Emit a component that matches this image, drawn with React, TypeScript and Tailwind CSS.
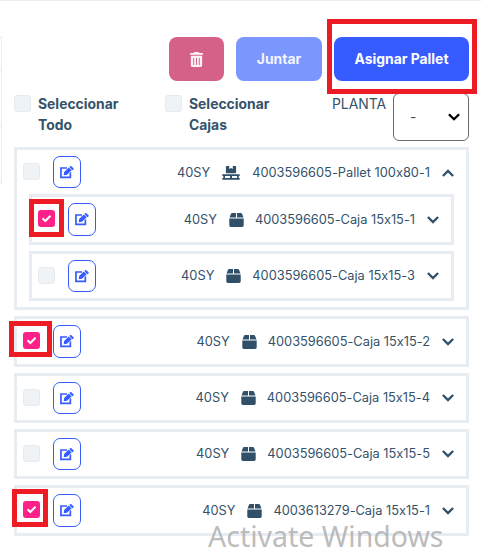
import React from "react";
import { FaTrashCan } from "react-icons/fa6";

function Check({ on = false, mark = "" }: { on?: boolean; mark?: string }) {
  return (
    <span
      className={`relative flex size-[17px] shrink-0 items-center justify-center rounded-[3px] ${
        on ? "bg-[#ff2088] text-white" : "border border-[#e6ebf1] bg-[#eff3f6]"
      }`}
    >
      {on && (
        <svg width="11" height="9" viewBox="0 0 11 9" fill="none" stroke="currentColor" strokeWidth="2">
          <path d="M1.5 4.2l2.8 2.8L9.5 1.8" />
        </svg>
      )}
      {mark && <span className={`absolute border-5 border-[#ed1c24] ${mark}`} />}
    </span>
  );
}

function Chevron({ up = false }: { up?: boolean }) {
  return (
    <svg
      className={`ml-3 shrink-0 text-[#30506a] ${up ? "rotate-180" : ""}`}
      width="12"
      height="8"
      viewBox="0 0 12 8"
      fill="none"
      stroke="currentColor"
      strokeWidth="2.3"
    >
      <path d="M.9 1L6 6.1 11.1 1" />
    </svg>
  );
}

function EditIcon() {
  return (
    <svg width="14" height="13" viewBox="0 0 14 13" fill="currentColor">
      <path d="M7 1.2v1.6H1.8v7.7h7.7V7.2l1.7-1.5v6.5H.1v-11z" />
      <path d="M3.7 9.2l.4-3.2L8.8 1.4l2.9 2.8L7 8.8z" />
      <path d="M9.4 .9l.8-.7c.3-.3.8-.3 1.1 0l2.2 2.1c.3.3.3.8 0 1.1l-1.2 .9z" />
    </svg>
  );
}

function BoxIcon() {
  return (
    <svg className="ml-3 shrink-0 text-[#30506a]" width="15" height="14" viewBox="0 0 15 14" fill="currentColor">
      <path d="M3.2 0H7v4.6H.5L2 .8C2.2.3 2.6 0 3.2 0zM8 0h3.8c.6 0 1 .3 1.2.8l1.5 3.8H8z" />
      <path d="M.3 5.5h14.4v6.8c0 .9-.7 1.6-1.6 1.6H1.9c-.9 0-1.6-.7-1.6-1.6z" />
    </svg>
  );
}

function PalletIcon() {
  return (
    <svg className="ml-3 shrink-0 text-[#30506a]" width="18" height="14" viewBox="0 0 18 14" fill="currentColor">
      <path d="M4.6 0h2.6v3L9 2.1l1.8.9V0h2.6c.4 0 .7.3.7.7v5.9c0 .3-.3.6-.7.6H4.6c-.4 0-.7-.3-.7-.6V.7c0-.4.3-.7.7-.7z" />
      <path d="M.3 8.3h17.4V10h-1v2.1h1v1.7H.3v-1.7h1V10h-1zM3 10v2.1h5V10zm7 0v2.1h5V10z" fillRule="evenodd" />
    </svg>
  );
}

type RowProps = {
  name: string;
  on?: boolean;
  mark?: string;
  pallet?: boolean;
  tall?: boolean;
};

function RowLine({ name, on, mark, pallet, tall }: RowProps) {
  return (
    <div className="flex items-start pt-[6px] pr-3 pl-[6px]">
      <div className="pt-[7px]">
        <Check on={on} mark={mark} />
      </div>
      <button
        className={`ml-[13px] flex w-7 shrink-0 items-center justify-center rounded-[7px] border border-[#365bff] text-[#365bff] ${
          tall ? "h-[33px]" : "h-8"
        }`}
      >
        <EditIcon />
      </button>
      <div
        className={`flex flex-1 items-center justify-end whitespace-nowrap ${
          tall || pallet ? "h-[33px]" : "h-8"
        }`}
      >
        <span>40SY</span>
        {pallet ? <PalletIcon /> : <BoxIcon />}
        <span className={pallet ? "ml-3" : "ml-[11px]"}>{name}</span>
        <Chevron up={pallet} />
      </div>
    </div>
  );
}

function Row(props: RowProps) {
  return (
    <div className={`border-3 border-[#e8edf3] ${props.tall ? "h-[51px]" : "h-[50px]"}`}>
      <RowLine {...props} />
    </div>
  );
}

export default function App() {
  return (
    <div className="relative h-[555px] w-[481px] overflow-hidden bg-white font-['Inter',sans-serif] text-[#34526a] [font-feature-settings:'calt'_0]">
      <div className="absolute inset-x-0 top-0 h-px bg-[#e8edf3]" />
      <div className="absolute top-[37px] left-0 flex h-[147px] w-[2px] flex-col border-y border-r border-[#e8edf3]">
        <div className="h-[34px] border-b border-[#e8edf3]" />
        <div className="h-14 border-b border-[#e8edf3]" />
      </div>

      <div className="pr-3 pl-[14px]">
        <div className="flex justify-end gap-3 pt-[37px] text-[13.9px] font-bold text-white">
          <button className="flex h-11 w-[55px] items-center justify-center rounded-lg bg-[#d66188] text-[#fdf3f6]">
            <FaTrashCan className="size-[15px]" />
          </button>
          <button className="h-11 w-[86px] rounded-lg bg-[#7c96ff] pt-px text-[#f3f5ff]">Juntar</button>
          <button className="relative h-11 w-[135px] rounded-lg bg-[#365bff] pt-px">
            Asignar Pallet
            <span className="absolute -top-[18px] -left-[7px] h-[75px] w-[150px] border-5 border-[#ed1c24]" />
          </button>
        </div>

        <div className="flex h-[66px] items-start text-[13.9px] leading-[21px]">
          <div className="flex w-[151px] gap-[7px] pt-[13px]">
            <div className="pt-px">
              <Check />
            </div>
            <span className="w-[82px] font-bold">Seleccionar Todo</span>
          </div>
          <div className="flex w-[167px] gap-[7px] pt-[13px]">
            <div className="pt-px">
              <Check />
            </div>
            <span className="w-[82px] font-bold">Seleccionar Cajas</span>
          </div>
          <span className="w-[61px] pt-[13px]">PLANTA</span>
          <div className="mt-[12px] flex h-12 w-[76px] items-center justify-between rounded-md border border-[#6b6b6b] pr-2 pl-4">
            <span>-</span>
            <svg width="12" height="8" viewBox="0 0 12 8" fill="none" stroke="#000" strokeWidth="2.3">
              <path d="M.9 1.2L6 6.2l5.1-5" />
            </svg>
          </div>
        </div>

        <div className="flex flex-col gap-[6px] text-[12.8px]">
          <div className="h-[163px] border-3 border-[#e8edf3]">
            <div className="h-11">
              <RowLine name="4003596605-Pallet 100x80-1" pallet />
            </div>
            <div className="flex flex-col gap-[6px] px-3">
              <Row name="4003596605-Caja 15x15-1" on tall mark="-left-[9px] -top-[11px] h-[38px] w-[35px]" />
              <Row name="4003596605-Caja 15x15-3" />
            </div>
          </div>
          <Row name="4003596605-Caja 15x15-2" on tall mark="-left-[14px] -top-[11px] h-9 w-[43px]" />
          <Row name="4003596605-Caja 15x15-4" />
          <Row name="4003596605-Caja 15x15-5" />
          <Row name="4003613279-Caja 15x15-1" on tall mark="-left-[11px] -top-[12px] h-[38px] w-9" />
        </div>
      </div>

      <div className="absolute top-[519px] left-[208px] font-['Noto_Sans','Open_Sans',sans-serif] text-[28.5px] leading-[34px] whitespace-nowrap text-[#aaaaaa]/80">
        Activate Windows
      </div>
    </div>
  );
}
